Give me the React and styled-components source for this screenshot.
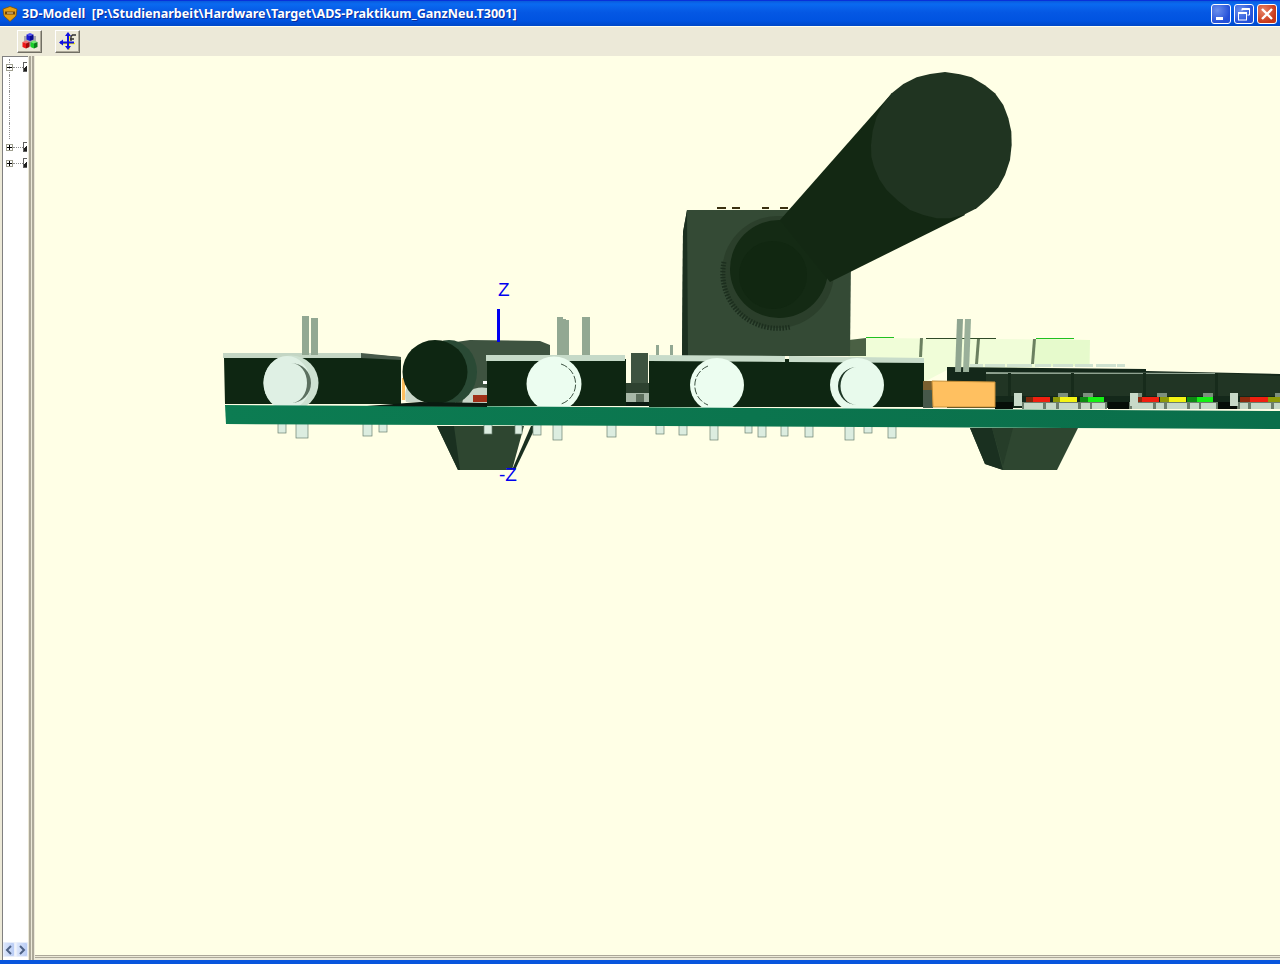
import React from 'react'
import styled, { createGlobalStyle } from 'styled-components'

const GlobalStyle = createGlobalStyle`
    html, body {
        margin: 0;
        padding: 0;
        background: #ECE9D8;
        overflow: hidden;
    }
`

const pinsBelow = [
    [278, 8, 433], [296, 12, 438], [363, 9, 436], [379, 8, 432], [484, 8, 434], [515, 7, 434],
    [533, 8, 435], [553, 9, 440], [607, 9, 437], [656, 8, 434], [679, 8, 435], [710, 8, 440],
    [745, 7, 433], [758, 8, 437], [781, 7, 436], [805, 8, 437], [845, 9, 440], [864, 8, 433], [888, 8, 438],
]

const pinsAbove = [
    [302, 7, 316], [311, 7, 318], [557, 6, 317], [563, 3, 319], [566, 3, 320], [582, 8, 317], [656, 3, 345], [670, 3, 345],
]

// x, width of the dim end, width of the lit end, dim colour, lit colour
const leds = [
    [1026, 7, 17, '#7E2A0E', '#F02010'], [1053, 7, 17, '#8E9A08', '#F4F414'], [1080, 8, 16, '#0E8A14', '#14F014'],
    [1133, 9, 17, '#8E2A0E', '#F02010'], [1160, 9, 17, '#8E9A08', '#F4F414'], [1187, 10, 16, '#0E8A14', '#14F014'],
    [1240, 10, 18, '#8E2A0E', '#F02010'], [1268, 12, 0, '#8E9A08', '#F4F414'],
]

const ledTabs = [1058, 1083, 1132, 1157, 1203, 1275]

const pads = [
    [1024, 19], [1046, 10], [1059, 19], [1081, 9], [1092, 13],
    [1132, 21], [1156, 8], [1167, 20], [1190, 9], [1201, 15],
    [1240, 8], [1251, 20], [1274, 6],
]

const chips = [[970, 13], [985, 20], [1007, 25], [1035, 16], [1053, 20], [1075, 18], [1096, 20], [1117, 8]]

const capPoints = [
    [700, 72], [740, 52], [780, 42], [825, 36], [870, 43], [905, 52], [945, 76], [975, 100], [1000, 135], [1015, 175],
    [1024, 215], [1025, 255], [1020, 300], [1005, 345], [985, 382], [955, 415], [920, 445], [880, 465], [840, 475],
    [800, 475], [760, 465], [720, 450], [685, 423], [650, 390], [628, 358], [612, 320], [604, 290], [603, 255],
    [608, 212], [620, 170], [640, 132], [665, 100],
].map(([x, y]) => `${670 + x / 3},${60 + y / 3}`).join(' ')

function Buttons() {
    return (
        <g>
            <circle cx="291" cy="383" r="27.5" fill="#CDE1D1" />
            <ellipse cx="287" cy="383" rx="23.5" ry="27" fill="#DFF0E4" />
            <path d="M291 363 A20 20 0 0 1 291 403 A16 20 0 0 0 291 363" fill="#5C7060" />
            <circle cx="554" cy="384" r="27.5" fill="#ECFDF0" />
            <path d="M561 364 A21 21 0 0 1 561 404" fill="none" stroke="#3D5242" strokeWidth="1" strokeDasharray="7 2" />
            <circle cx="717" cy="385" r="27" fill="#ECFDF0" />
            <path d="M708 366 A21 21 0 0 0 708 405" fill="none" stroke="#3D5242" strokeWidth="1" strokeDasharray="7 2" />
            <circle cx="857" cy="385" r="27" fill="#E8FAEC" />
            <path d="M857 367 A19 19 0 0 0 857 405 A16.5 19 0 0 1 857 367" fill="#1D3524" />
        </g>
    )
}

function Scene() {
    return (
        <SceneSvg viewBox="35 56 1245 899" width="1245" height="899">
            <defs>
                <linearGradient id="boardFill" x1="0" x2="1" y1="0" y2="0">
                    <stop offset="0" stopColor="#0C7C52" />
                    <stop offset="1" stopColor="#0A6E4A" />
                </linearGradient>
            </defs>

            {/* pale parts behind the board */}
            <polygon points="848,340 866,338 1090,340 1090,366 947,370 924,382 866,382 848,356" fill="#F0FDD8" />
            <polygon points="849,340 866,338 866,356 849,356" fill="#4A6044" />
            <polygon points="1035,339 1090,340 1089,366 1035,366" fill="#E6FACC" />
            <polygon points="920,338 923,338 922,357 919,357" fill="#6B8060" />
            <polygon points="977,339 980,339 978,364 975,364" fill="#6B8060" />
            <polygon points="1033,339 1036,339 1034,364 1031,364" fill="#6B8060" />
            <rect x="866" y="337" width="28" height="1" fill="#20C020" />
            <rect x="1036" y="338" width="38" height="1" fill="#20C020" />
            <rect x="926" y="338" width="70" height="1" fill="#304A28" />

            {/* toggle switch */}
            <polygon points="687,210 790,210 851,258 850,356 682,356 683,232" fill="#344A35" />
            <polygon points="687,210 688,356 682,356 683,232" fill="#1C3020" />
            <g fill="#3A3010">
                <rect x="717" y="207" width="9" height="2" />
                <rect x="732" y="207" width="8" height="2" />
                <rect x="762" y="207" width="7" height="2" />
                <rect x="780" y="207" width="8" height="2" />
            </g>
            <circle cx="778" cy="272" r="56" fill="#2B3F2B" />
            <path d="M724 262 A55 55 0 0 0 790 327" fill="none" stroke="#1C2E1E" strokeWidth="5" strokeDasharray="1.5 1.5" />
            <circle cx="779" cy="269" r="49" fill="#142A14" />
            <circle cx="773" cy="275" r="34" fill="#112711" />
            <polygon points="892,93 780,220 830,282 965,215" fill="#132813" />
            <polygon points={capPoints} fill="#203421" />

            {/* black connector and its cylinder */}
            <polygon points="456,342 470,340 540,341 550,345 550,405 456,405" fill="#3E5340" />
            <rect x="483" y="381" width="4" height="3" fill="#fff" />
            <path d="M462 404 A20 18 0 0 1 487 388 L487 404 Z" fill="#C8D6C8" />
            <rect x="473" y="395" width="14" height="7" fill="#A03018" />
            <ellipse cx="449" cy="372" rx="28" ry="32" fill="#2A4A35" />
            <rect x="402" y="378" width="3" height="22" fill="#FFC060" />
            <path d="M406 402 A8 14 0 0 1 412 382 L422 402 Z" fill="#C8D6C8" />
            <ellipse cx="435" cy="372" rx="32.5" ry="32" fill="#0E2612" />

            {/* dark IC row */}
            <polygon points="947,367 1146,369 1146,371 1280,374 1280,408 947,408" fill="#14281A" />
            <polygon points="986,373 1217,373 1280,376 1280,396 986,396" fill="#213524" />
            <polygon points="986,372 1217,373 1217,374 986,374" fill="#8FA290" />
            {chips.map(([x, w]) => (
                <rect key={x} x={x} y="364" width={w} height="3" fill="#D0E2D0" />
            ))}
            {[1008, 1071, 1143, 1215].map(x => (
                <rect key={x} x={x} y="373" width="3" height="23" fill="#172B1B" />
            ))}

            {ledTabs.map(x => (
                <rect key={x} x={x} y="393" width="10" height="4" fill="#7D8F7D" />
            ))}
            {[[995, 18], [1108, 24], [1218, 20]].map(([x, w]) => (
                <rect key={x} x={x} y="402" width={w} height="7" fill="#060E08" />
            ))}
            {[[1022, 85], [1129, 89], [1237, 43]].map(([x, w]) => (
                <rect key={x} x={x} y="402" width={w} height="7" fill="#6C7E6C" />
            ))}
            {pads.map(([x, w]) => (
                <rect key={x} x={x} y="403" width={w} height="6" fill="#C6D8C6" />
            ))}
            {leds.map(([x, dim, lit, dark, light]) => (
                <g key={x}>
                    <rect x={x} y="397" width={dim} height="5" fill={dark} />
                    <rect x={x + dim} y="397" width={lit} height="5" fill={light} />
                </g>
            ))}
            {[1014, 1130, 1230].map(x => (
                <rect key={x} x={x} y="393" width="8" height="13" fill="#C8DAC8" />
            ))}

            {/* switch housings */}
            <polygon points="224,358 361,358 361,354 401,357 401,404 225,404" fill="#0E2612" />
            <polygon points="361,353 401,357 401,360 361,358" fill="#47594A" />
            <rect x="223" y="353" width="138" height="5" fill="#C4D6C4" />
            <rect x="487" y="359" width="139" height="47" fill="#0E2612" />
            <rect x="486" y="355" width="139" height="6" fill="#C6DAC8" />
            <rect x="631" y="353" width="17" height="30" fill="#3E5340" />
            <rect x="626" y="383" width="23" height="10" fill="#2E4230" />
            <rect x="626" y="393" width="23" height="9" fill="#A8B8A8" />
            <rect x="636" y="394" width="8" height="8" fill="#5C6E5C" />
            <rect x="626" y="402" width="23" height="4" fill="#0A1A10" />
            <rect x="649" y="359" width="275" height="48" fill="#0E2612" />
            <polygon points="649,355 785,356 785,362 649,361" fill="#C8DCCA" />
            <polygon points="789,356 924,358 924,363 789,362" fill="#C8DCCA" />
            <Buttons />

            {pinsAbove.map(([x, w, y]) => (
                <rect key={x} x={x} y={y} width={w} height={355 - y} fill="#92A892" />
            ))}
            <polygon points="957,319 963,319 961,372 955,372" fill="#8FA590" />
            <polygon points="965,319 971,319 969,372 963,372" fill="#9AB09A" />

            {/* orange cap */}
            <rect x="923" y="381" width="10" height="9" fill="#7A6030" />
            <rect x="923" y="390" width="10" height="18" fill="#46584A" />
            <polygon points="932,381 995,382 995,407 933,407" fill="#FFC060" stroke="#C89038" />

            {/* feet and pins under the board */}
            <polygon points="437,426 524,426 512,470 458,470" fill="#2E4630" />
            <polygon points="437,426 454,426 460,470 458,470" fill="#1A3020" />
            <polygon points="531,426 536,426 515,470 512,470" fill="#1A3020" />
            <polygon points="970,428 1078,428 1057,470 1003,470 985,464" fill="#2E4630" />
            <polygon points="970,428 992,428 1003,470 985,464" fill="#1A3020" />
            <polygon points="992,428 1013,428 1003,466" fill="#263D29" />
            {pinsBelow.map(([x, w, y]) => (
                <rect key={x} x={x} y="422" width={w} height={y - 422} fill="#DCEDE0" stroke="#6C8070" strokeWidth="0.7" />
            ))}

            {/* board */}
            <polygon points="225,405 1280,411 1280,429 226,424" fill="url(#boardFill)" />
            <polygon points="367,406 420,402 487,403 487,407" fill="#0A1A10" />

            {/* axis */}
            <rect x="497" y="309" width="3" height="33" fill="#0000F0" />
            <AxisLabel x="498" y="296">Z</AxisLabel>
            <AxisLabel x="499" y="481">-Z</AxisLabel>
        </SceneSvg>
    )
}

function TreeRow({ expanded, stem }) {
    return (
        <Row>
            <Expander>
                <svg width="5" height="5" viewBox="0 0 5 5">
                    <path d={expanded ? 'M0 2.5H5' : 'M0 2.5H5M2.5 0V5'} stroke="#000" strokeWidth="1" />
                </svg>
            </Expander>
            <Dots />
            <Check />
            {stem && <Stem />}
        </Row>
    )
}

function Cube({ x, y, top, side, front }) {
    return (
        <g transform={`translate(${x} ${y})`}>
            <polygon points="0,1.5 3.5,0 7,1.5 3.5,3" fill={top} />
            <polygon points="0,1.5 3.5,3 3.5,8 0,6.5" fill={front} />
            <polygon points="7,1.5 3.5,3 3.5,8 7,6.5" fill={side} />
        </g>
    )
}

function App() {
    return (
        <Wrap>
            <GlobalStyle />
            <TitleBar>
                <AppIcon viewBox="0 0 16 16" width="16" height="16">
                    <path d="M1 3 L8 0.5 L15 3 L14 10 L8 15.5 L2 10 Z" fill="#E8A010" stroke="#7A5208" strokeWidth="0.8" />
                    <rect x="3" y="5.5" width="10" height="3" fill="#6A4410" />
                    <rect x="5" y="6.5" width="6" height="1" fill="#F8E0A0" />
                </AppIcon>
                <Title>{'3D-Modell  [P:\\Studienarbeit\\Hardware\\Target\\ADS-Praktikum_GanzNeu.T3001]'}</Title>
                <WinButtons>
                    <WinButton>
                        <svg width="20" height="20" viewBox="0 0 20 20"><rect x="5" y="13" width="7" height="3" fill="#fff" /></svg>
                    </WinButton>
                    <WinButton>
                        <svg width="20" height="20" viewBox="0 0 20 20" fill="none" stroke="#fff">
                            <path d="M8 6.5V4.5H15.5V11H13.5" strokeWidth="1" />
                            <path d="M8 5H15.5" strokeWidth="2" />
                            <rect x="4.5" y="8.5" width="8" height="7.5" strokeWidth="1" />
                            <path d="M4.5 9H12.5" strokeWidth="2" />
                        </svg>
                    </WinButton>
                    <WinButton $close>
                        <svg width="20" height="20" viewBox="0 0 20 20"><path d="M5 5L15 15M15 5L5 15" stroke="#fff" strokeWidth="2.4" /></svg>
                    </WinButton>
                </WinButtons>
            </TitleBar>
            <Toolbar>
                <ToolButton>
                    <svg width="18" height="18" viewBox="0 0 18 18">
                        <rect x="3" y="4" width="12" height="10" fill="#A8A8B0" />
                        <Cube x={5.5} y={1} top="#5050F0" front="#1818D0" side="#080890" />
                        <Cube x={1.5} y={8.5} top="#F87070" front="#F01818" side="#A00808" />
                        <Cube x={9.5} y={8.5} top="#70F070" front="#18D028" side="#088018" />
                    </svg>
                </ToolButton>
                <ToolButton>
                    <svg width="18" height="18" viewBox="0 0 18 18">
                        <path d="M2 11.5H16M10 3V18" stroke="#F0F000" strokeWidth="1.4" />
                        <path d="M9 2V16M1 10.5H15" stroke="#1010E0" strokeWidth="2" />
                        <path d="M9 0L12 4H6ZM9 18L12 14H6ZM0 10.5L4 7.5V13.5Z" fill="#1010E0" />
                        <path d="M12 9V4.5L13.5 3H17M11 7H15" stroke="#303030" strokeWidth="1.4" fill="none" />
                    </svg>
                </ToolButton>
            </Toolbar>
            <Body>
                <TreePanel>
                    <Tree>
                        <TreeRow expanded stem />
                        {[0, 1, 2, 3].map(i => <BlankRow key={i}><Stem /></BlankRow>)}
                        <TreeRow />
                        <TreeRow />
                    </Tree>
                    <ScrollBar>
                        <ScrollButton>
                            <svg width="8" height="10" viewBox="0 0 8 10"><path d="M6 1L2 5L6 9" fill="none" stroke="#4D6185" strokeWidth="2" /></svg>
                        </ScrollButton>
                        <ScrollButton>
                            <svg width="8" height="10" viewBox="0 0 8 10"><path d="M2 1L6 5L2 9" fill="none" stroke="#4D6185" strokeWidth="2" /></svg>
                        </ScrollButton>
                    </ScrollBar>
                </TreePanel>
                <Splitter />
                <Viewport>
                    <Scene />
                    <BottomSplitter />
                </Viewport>
            </Body>
            <BottomBorder />
        </Wrap>
    )
}

export default App


const Wrap = styled.div`
    width: 1280px;
    height: 964px;
    display: flex;
    flex-direction: column;
    background: #ECE9D8;
    overflow: hidden;
`

const TitleBar = styled.div`
    height: 25px;
    flex: none;
    display: flex;
    align-items: center;
    padding: 0 3px 0 2px;
    background: linear-gradient(180deg, #0A5BDC 0%, #0A6AF0 12%, #0558E4 45%, #0053E0 80%, #0048C8 100%);
    border-top: 1px solid #0831D9;
`

const AppIcon = styled.svg`
    flex: none;
    margin-right: 4px;
`

const Title = styled.div`
    flex: 1;
    font-family: "Noto Sans", sans-serif;
    font-weight: 700;
    font-size: 12.62px;
    color: #fff;
    white-space: pre;
    text-shadow: 1px 1px 0 #0A2C9A;
`

const WinButtons = styled.div`
    display: flex;
    gap: 3px;
`

const WinButton = styled.div`
    width: 20px;
    height: 20px;
    box-sizing: border-box;
    display: flex;
    align-items: center;
    justify-content: center;
    border: 1px solid #fff;
    border-radius: 3px;
    background: ${props => props.$close
        ? 'radial-gradient(circle at 30% 30%, #E88468, #C83818 70%)'
        : 'radial-gradient(circle at 30% 30%, #6C90EC, #2450D8 70%)'};

    svg {
        flex: none;
        margin: -1px;
    }
`

const Toolbar = styled.div`
    height: 30px;
    flex: none;
    box-sizing: border-box;
    border-top: 1px solid #FFFFF0;
    display: flex;
    align-items: center;
    gap: 13px;
    padding: 0 0 1px 17px;
    background: #ECE9D8;
`

const ToolButton = styled.div`
    width: 25px;
    height: 23px;
    box-sizing: border-box;
    display: flex;
    align-items: center;
    justify-content: center;
    background: #ECE9D8;
    border: 1px solid;
    border-color: #FFF #716F64 #716F64 #FFF;
    box-shadow: inset -1px -1px 0 #ACA899;
`

const Body = styled.div`
    flex: 1;
    display: flex;
    min-height: 0;
`

const TreePanel = styled.div`
    width: 26px;
    flex: none;
    margin-left: 2px;
    display: flex;
    flex-direction: column;
    background: #fff;
    border-left: 1px solid #808080;
    border-top: 1px solid #808080;
    box-sizing: border-box;
`

const Tree = styled.div`
    flex: 1;
    padding-top: 2px;
    overflow: hidden;
`

const Row = styled.div`
    position: relative;
    height: 16px;
    display: flex;
    align-items: center;
    padding-left: 3px;
`

const BlankRow = styled.div`
    position: relative;
    height: 16px;
`

const Expander = styled.div`
    flex: none;
    width: 7px;
    height: 7px;
    box-sizing: border-box;
    display: flex;
    align-items: center;
    justify-content: center;
    background: #fff;
    border: 1px solid #A0A090;

    svg {
        flex: none;
    }
`

const Dots = styled.div`
    width: 10px;
    flex: none;
    border-top: 1px dotted #909090;
`

const Check = styled.div`
    flex: none;
    width: 4px;
    height: 10px;
    box-sizing: border-box;
    border: 1px solid #606060;
    border-right: none;
    background: linear-gradient(135deg, #fff 50%, #202020 50%);
`

const Stem = styled.div`
    position: absolute;
    left: 6px;
    top: 0;
    bottom: 0;
    border-left: 1px dotted #909090;
`

const ScrollBar = styled.div`
    height: 15px;
    flex: none;
    margin-bottom: 3px;
    display: flex;
    gap: 1px;
    background: #F0F3FA;
`

const ScrollButton = styled.div`
    width: 12px;
    height: 15px;
    display: flex;
    align-items: center;
    justify-content: center;
    border-radius: 2px;
    background: linear-gradient(90deg, #DCE6FB, #B9CCF5);
    border: 1px solid #E8EEFB;
    box-sizing: border-box;
`

const Splitter = styled.div`
    width: 7px;
    flex: none;
    background: linear-gradient(90deg, #ECE9D8 0 1px, #ACA899 1px 3px, #ECE9D8 3px 4px, #ACA899 4px 6px, #ECE9D8 6px 7px);
`

const Viewport = styled.div`
    flex: 1;
    display: flex;
    flex-direction: column;
    background: #FFFFE6;
    min-width: 0;
`

const SceneSvg = styled.svg`
    display: block;
    flex: none;
`

const AxisLabel = styled.text`
    font-family: "Liberation Sans", sans-serif;
    font-size: 19px;
    fill: #0000F0;
`

const BottomSplitter = styled.div`
    height: 5px;
    flex: none;
    background: linear-gradient(180deg, #ACA899 0 1px, #ECE9D8 1px 2px, #ACA899 2px 3px, #ECE9D8 3px 5px);
`

const BottomBorder = styled.div`
    height: 4px;
    flex: none;
    background: #0855DD;
`
